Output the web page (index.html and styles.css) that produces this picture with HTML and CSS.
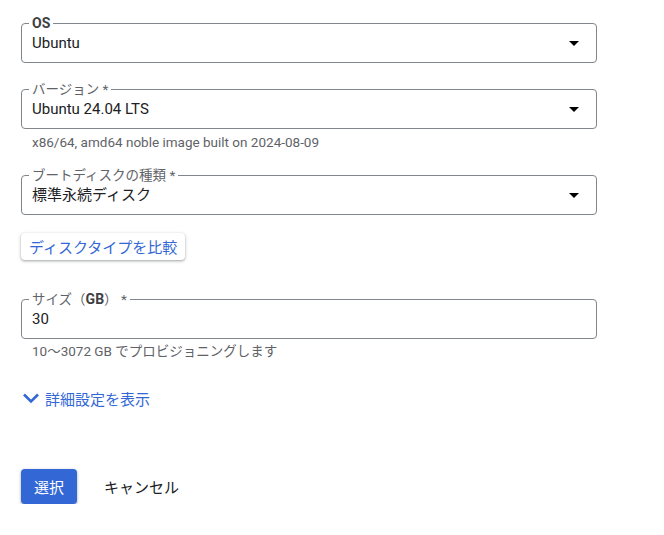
FILE: index.html
```html
<!DOCTYPE html>
<html lang="ja">
<head>
<meta charset="utf-8">
<link rel="stylesheet" href="styles.css">
</head>
<body>
<div class="form">
  <div class="field f-os">
    <span class="label"><b>OS</b></span>
    <span class="value">Ubuntu</span>
    <svg class="arrow" width="24" height="24" viewBox="0 0 24 24"><path d="M7 10l5 5 5-5z"/></svg>
  </div>

  <div class="field f-ver">
    <span class="label">バージョン *</span>
    <span class="value">Ubuntu 24.04 LTS</span>
    <svg class="arrow" width="24" height="24" viewBox="0 0 24 24"><path d="M7 10l5 5 5-5z"/></svg>
  </div>
  <div class="hint">x86/64, amd64 noble image built on 2024-08-09</div>

  <div class="field f-disk">
    <span class="label">ブートディスクの種類 *</span>
    <span class="value">標準永続ディスク</span>
    <svg class="arrow" width="24" height="24" viewBox="0 0 24 24"><path d="M7 10l5 5 5-5z"/></svg>
  </div>

  <div class="compare-row">
    <button class="compare">ディスクタイプを比較</button>
  </div>

  <div class="field f-size">
    <span class="label">サイズ（<b>GB</b>） *</span>
    <span class="value">30</span>
  </div>
  <div class="hint">10〜3072 GB でプロビジョニングします</div>

  <div class="advanced">
    <svg class="chev" width="18" height="12" viewBox="0 0 18 12"><polyline points="2,2.5 9,9.5 16,2.5" fill="none" stroke="#3367d6" stroke-width="2.6"/></svg>
    <span>詳細設定を表示</span>
  </div>

  <div class="actions">
    <button class="primary">選択</button>
    <button class="cancel">キャンセル</button>
  </div>
</div>
</body>
</html>
```

FILE: styles.css
```css
html, body {
  margin: 0;
  padding: 0;
  background: #ffffff;
}
body {
  font-family: "Roboto", "Noto Sans CJK JP", sans-serif;
  color: #202124;
}
.form {
  padding: 23px 0 0 21px;
  width: 576px;
}
.field {
  position: relative;
  box-sizing: border-box;
  height: 40px;
  border: 1px solid #80868b;
  border-radius: 4px;
  display: flex;
  align-items: center;
  padding: 0 10px 0 10px;
}
.label {
  position: absolute;
  top: -9px;
  left: 7px;
  padding: 0 3px;
  background: #ffffff;
  font-size: 13.5px;
  line-height: 16px;
  color: #5f6368;
}
.label b {
  font-weight: 700;
  font-size: 14px;
  color: #3c4043;
}
.value {
  flex: 1;
  font-size: 15px;
  line-height: 20px;
  color: #202124;
}
.arrow {
  flex: none;
  fill: #000000;
}
.f-ver { margin-top: 26px; }
.hint {
  padding-left: 11px;
  margin-top: 3px;
  font-size: 13.5px;
  line-height: 20px;
  color: #5f6368;
}
.f-disk { margin-top: 23px; }
.compare-row {
  margin-top: 18px;
  display: flex;
}
.compare {
  height: 27px;
  box-sizing: border-box;
  padding: 0 8px;
  border: none;
  border-radius: 4px;
  background: #ffffff;
  color: #3367d6;
  font-family: "Roboto", "Noto Sans CJK JP", sans-serif;
  font-size: 15px;
  box-shadow: 0 1px 2px rgba(60,64,67,0.3), 0 1px 3px 1px rgba(60,64,67,0.15);
}
.f-size { margin-top: 39px; }
.f-size + .hint { margin-top: 2px; }
.advanced {
  margin-top: 25px;
  height: 24px;
  display: flex;
  align-items: center;
  gap: 5px;
  padding-left: 1px;
  color: #3367d6;
  font-size: 15px;
}
.chev { flex: none; }
.actions {
  margin-top: 59px;
  display: flex;
  align-items: center;
}
.primary {
  width: 56px;
  height: 35px;
  border: none;
  border-radius: 4px;
  background: #3367d6;
  color: #ffffff;
  font-family: "Roboto", "Noto Sans CJK JP", sans-serif;
  font-size: 15px;
  box-shadow: 0 1px 2px rgba(60,64,67,0.3), 0 1px 3px 1px rgba(60,64,67,0.15);
}
.cancel {
  margin-left: 20px;
  height: 35px;
  padding: 0 7px;
  border: none;
  background: transparent;
  color: #202124;
  font-family: "Roboto", "Noto Sans CJK JP", sans-serif;
  font-size: 15px;
}
```
